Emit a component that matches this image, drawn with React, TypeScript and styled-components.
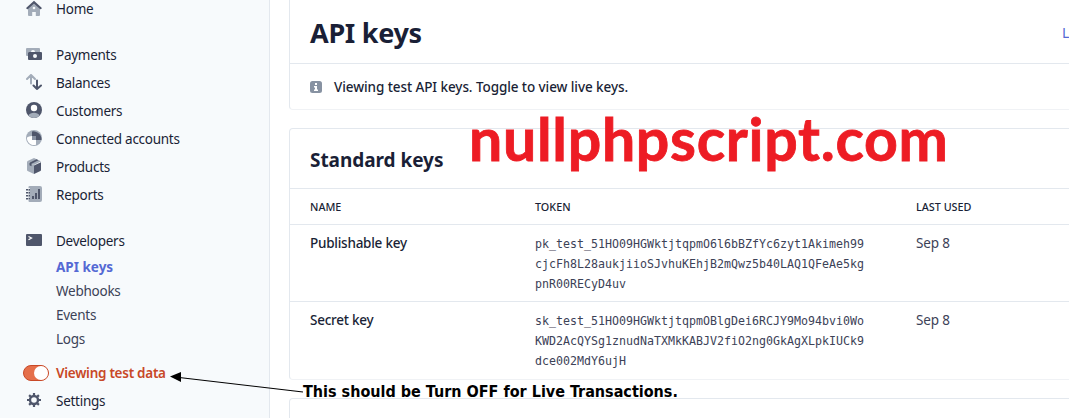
import React from "react";
import styled, { createGlobalStyle } from "styled-components";

const GlobalStyle = createGlobalStyle`
  html, body { margin: 0; background: #fff; overflow: hidden; }
  * { box-sizing: border-box; }
`;

const ink = "#1a1f36";
const slate = "#4f566b";
const mist = "#a3acb9";
const line = "#e3e8ee";

const Page = styled.div`
  position: relative;
  display: flex;
  width: 1069px;
  height: 418px;
  overflow: hidden;
  font-family: "Noto Sans", "Open Sans", sans-serif;
  font-size: 14px;
  color: ${ink};
`;

const Sidebar = styled.nav`
  flex: none;
  width: 270px;
  height: 418px;
  background: #f7fafc;
  border-right: 1px solid ${line};
  overflow: hidden;
`;

const NavGroup = styled.div<{ $top: number }>`
  margin-top: ${(p) => p.$top}px;
`;

const NavItem = styled.div<{ $active?: boolean }>`
  display: flex;
  align-items: center;
  height: 28px;
  white-space: nowrap;
  font-size: 13.5px;
  font-weight: ${(p) => (p.$active ? 600 : 400)};
  color: ${(p) => (p.$active ? "#c84827" : ink)};
`;

const NavLabel = styled.span`
  letter-spacing: -0.27px;
`;

const IconSlot = styled.span`
  display: flex;
  flex: none;
  width: 56px;
  padding: 0 0 2px 26px;
`;

const ToggleSlot = styled.span`
  flex: none;
  width: 56px;
  padding-left: 23px;
`;

const Toggle = styled.span`
  display: flex;
  justify-content: flex-end;
  width: 26px;
  height: 16px;
  border: 1px solid #c84827;
  border-radius: 8px;
  background: #e56f4a;
`;

const Knob = styled.span`
  width: 14px;
  height: 14px;
  border-radius: 50%;
  background: #fff;
`;

const SubItem = styled.div<{ $active?: boolean }>`
  display: flex;
  align-items: center;
  height: 24px;
  padding-left: 56px;
  font-size: 13.5px;
  letter-spacing: ${(p) => (p.$active ? 0 : -0.25)}px;
  font-weight: ${(p) => (p.$active ? 700 : 400)};
  color: ${(p) => (p.$active ? "#5469d4" : "#3c4257")};
`;

const Main = styled.main`
  flex: 1;
  min-width: 0;
  display: flex;
  flex-direction: column;
  gap: 18px;
  padding-left: 19px;
  margin-top: -10px;
`;

const Card = styled.section`
  flex: none;
  width: 800px;
  border: 1px solid ${line};
  border-bottom-color: #f0f2f5;
  border-radius: 4px;
`;

const PageHeader = styled.header`
  display: flex;
  align-items: center;
  justify-content: space-between;
  height: 73px;
  padding: 10px 0 0 20px;
  border-bottom: 1px solid ${line};
`;

const PageTitle = styled.h1`
  margin: 0;
  font-size: 27px;
  font-weight: 700;
  letter-spacing: -0.3px;
`;

const HeaderLink = styled.a`
  width: 26px;
  font-size: 14px;
  color: #5469d4;
  white-space: nowrap;
`;

const Banner = styled.div`
  display: flex;
  align-items: center;
  gap: 12px;
  height: 45px;
  padding: 0 0 0 20px;
  font-size: 13.5px;
  font-weight: 500;
  letter-spacing: -0.08px;
`;

const CardTitle = styled.h2`
  display: flex;
  align-items: center;
  height: 60px;
  margin: 0;
  padding: 3px 0 0 20px;
  border-bottom: 1px solid ${line};
  font-size: 19px;
  font-weight: 700;
  letter-spacing: -0.05px;
`;

const Row = styled.div<{ $head?: boolean; $last?: boolean }>`
  display: grid;
  grid-template-columns: 225px 381px 1fr;
  height: ${(p) => (p.$head ? 36 : 77)}px;
  padding: 8px 0 0 20px;
  border-bottom: ${(p) => (p.$last ? "none" : `1px solid ${line}`)};
  font-size: ${(p) => (p.$head ? 10.8 : 13.5)}px;
  font-weight: ${(p) => (p.$head ? 500 : 400)};
  line-height: 20px;
`;

const KeyName = styled.span`
  font-weight: 500;
  letter-spacing: -0.25px;
`;

const Token = styled.code`
  padding-top: 1px;
  font-family: "DejaVu Sans Mono", monospace;
  font-size: 11.63px;
  line-height: 20px;
  color: #3c4257;
  white-space: pre;
`;

const Muted = styled.span`
  color: #3c4257;
  letter-spacing: -0.15px;
`;

const Watermark = styled.div`
  position: absolute;
  left: 469px;
  top: 103px;
  font-family: Lato, sans-serif;
  font-size: 59px;
  font-weight: 700;
  line-height: 72px;
  letter-spacing: 0.7px;
  color: #ed1c24;
  -webkit-text-stroke: 0.8px #ed1c24;
  white-space: nowrap;
`;

const Note = styled.div`
  position: absolute;
  left: 303px;
  top: 382px;
  font-family: "DejaVu Sans Condensed", "DejaVu Sans", sans-serif;
  font-stretch: condensed;
  font-size: 16px;
  font-weight: 700;
  line-height: 20px;
  color: #000;
  white-space: nowrap;
`;

const Arrow = styled.svg`
  position: absolute;
  left: 165px;
  top: 365px;
`;

const Icon = ({ children }: { children: React.ReactNode }) => (
  <svg width="16" height="16" viewBox="0 0 16 16">{children}</svg>
);

const icons: Record<string, React.ReactNode> = {
  Home: (
    <>
      <path d="M2 7l6-5 6 5v8a1 1 0 0 1-1 1H9.800v-4H6.200v4H3a1 1 0 0 1-1-1z" fill={mist} />
      <circle cx="8" cy="8" r="1.300" fill="#f7fafc" />
      <path d="M1.300 8.200L8 2.200l6.700 6" fill="none" stroke={slate} strokeWidth="2" strokeLinecap="round" />
    </>
  ),
  Payments: (
    <>
      <path d="M1 2h12a1 1 0 0 1 1 1v3H9a2 2 0 0 0-4 0H2v4H1a1 1 0 0 1-1-1V3a1 1 0 0 1 1-1z" fill={mist} />
      <path fillRule="evenodd" d="M3 6h12a1 1 0 0 1 1 1v6a1 1 0 0 1-1 1H3a1 1 0 0 1-1-1V7a1 1 0 0 1 1-1zm6 2a2 2 0 1 0 0 4 2 2 0 0 0 0-4z" fill={slate} />
    </>
  ),
  Balances: (
    <g fill="none" strokeWidth="2" strokeLinecap="round" strokeLinejoin="round">
      <path d="M5 9.500V2M1 5l4-4 4 4" stroke={mist} />
      <path d="M11 6.500V15M7.500 11.500l3.500 3.500 4-3.500" stroke={slate} />
    </g>
  ),
  Customers: (
    <>
      <circle cx="8" cy="8" r="8" fill={slate} />
      <circle cx="8" cy="6" r="3.200" fill="#fff" />
      <path d="M2.300 13.600C3.500 11.500 5.500 10.700 8 10.700s4.500.8 5.700 2.900A8 8 0 0 1 8 16a8 8 0 0 1-5.700-2.400z" fill={mist} />
    </>
  ),
  "Connected accounts": (
    <>
      <circle cx="8" cy="8" r="8" fill={mist} />
      <path d="M6 1.500A8 8 0 0 1 15.500 10H10A4 4 0 0 0 6 6z" fill={slate} />
      <path d="M6 6v4h4v4.800A7 7 0 0 1 1 7.500Q2.500 6 6 6z" fill="#fff" />
      <path d="M6 6h4v4H6z" fill="#8992a3" />
    </>
  ),
  Products: (
    <>
      <path d="M8 0l7 3.300L8 7 1 3.300z" fill={mist} />
      <path d="M1 3.300l7 3.700V16L1.600 13a1 1 0 0 1-.6-1z" fill={mist} />
      <path d="M15 4.200V12a1 1 0 0 1-.6.9L8 16V7.500z" fill={slate} />
      <path d="M3.500 7.200V4.800L10.500 1.200l2 1-7 3.600v2.400z" fill={slate} />
    </>
  ),
  Reports: (
    <>
      <path d="M3.500 0H14a2 2 0 0 1 2 2v12a2 2 0 0 1-2 2H3.500a1 1 0 0 1-1-1V1a1 1 0 0 1 1-1z" fill={mist} />
      <path d="M0 2.300h4v1.900H0zM0 5.400h4v1.900H0zM0 8.700h4v1.900H0zM0 11.800h4v1.900H0z" fill="#f7fafc" />
      <path d="M0 3h2v1.600H0zM2.500 3H4v1.600H2.500zM0 6h2v1.600H0zM2.500 6H4v1.600H2.500zM0 9h2v1.600H0zM2.500 9H4v1.600H2.500zM0 12h2v1.600H0zM2.500 12H4v1.600H2.500zM6 10h2v3H6zM9 7h2v6H9zM12 3h2v10h-2z" fill={slate} />
    </>
  ),
  Developers: (
    <>
      <path d="M1 2h14a1 1 0 0 1 1 1v10a1 1 0 0 1-1 1H1a1 1 0 0 1-1-1V3a1 1 0 0 1 1-1z" fill={slate} />
      <path d="M2.500 4.500L5.500 6 2.500 7.800" fill="none" stroke="#fff" strokeWidth="1.300" />
    </>
  ),
  Settings: (
    <>
      <circle cx="8" cy="8" r="4" fill="none" stroke={slate} strokeWidth="2.400" />
      <path d="M8 1v2.500M8 12.500V15M1 8h2.500M12.500 8H15M3.100 3.100l1.700 1.700M11.200 11.200l1.700 1.700M3.100 12.900l1.700-1.700M11.200 4.800l1.700-1.700" stroke={slate} strokeWidth="2.200" />
    </>
  ),
};

const NavLink = ({ name }: { name: string }) => (
  <NavItem>
    <IconSlot><Icon>{icons[name]}</Icon></IconSlot>
    <NavLabel>{name}</NavLabel>
  </NavItem>
);

const keys = [
  {
    name: "Publishable key",
    token: "pk_test_51HO09HGWktjtqpmO6l6bBZfYc6zyt1Akimeh99\ncjcFh8L28aukjiioSJvhuKEhjB2mQwz5b40LAQ1QFeAe5kg\npnR00RECyD4uv",
    used: "Sep 8",
  },
  {
    name: "Secret key",
    token: "sk_test_51HO09HGWktjtqpmOBlgDei6RCJY9Mo94bvi0Wo\nKWD2AcQYSg1znudNaTXMkKABJV2fiO2ng0GkAgXLpkIUCk9\ndce002MdY6ujH",
    used: "Sep 8",
  },
];

export default function App() {
  return (
    <Page>
      <GlobalStyle />
      <Sidebar>
        <NavGroup $top={-5}><NavLink name="Home" /></NavGroup>
        <NavGroup $top={18}>
          {["Payments", "Balances", "Customers", "Connected accounts", "Products", "Reports"].map((n) => (
            <NavLink key={n} name={n} />
          ))}
        </NavGroup>
        <NavGroup $top={18}>
          <NavLink name="Developers" />
          <SubItem $active>API keys</SubItem>
          <SubItem>Webhooks</SubItem>
          <SubItem>Events</SubItem>
          <SubItem>Logs</SubItem>
        </NavGroup>
        <NavGroup $top={8}>
          <NavItem $active>
            <ToggleSlot><Toggle><Knob /></Toggle></ToggleSlot>
            <NavLabel>Viewing test data</NavLabel>
          </NavItem>
          <NavLink name="Settings" />
        </NavGroup>
      </Sidebar>
      <Main>
        <Card>
          <PageHeader>
            <PageTitle>API keys</PageTitle>
            <HeaderLink>L</HeaderLink>
          </PageHeader>
          <Banner>
            <svg width="12" height="12" viewBox="0 0 12 12">
              <rect width="12" height="12" rx="2.500" fill="#8792a2" />
              <path d="M5 2h2v2H5zM4 5h3v3.500h1V10H4V8.500h1v-2H4z" fill="#fff" />
            </svg>
            <span>Viewing test API keys. Toggle to view live keys.</span>
          </Banner>
        </Card>
        <Card>
          <CardTitle>Standard keys</CardTitle>
          <Row $head>
            <span>NAME</span>
            <span>TOKEN</span>
            <span>LAST USED</span>
          </Row>
          {keys.map((k, i) => (
            <Row key={k.name} $last={i === keys.length - 1}>
              <KeyName>{k.name}</KeyName>
              <Token>{k.token}</Token>
              <Muted>{k.used}</Muted>
            </Row>
          ))}
        </Card>
        <Card><CardTitle /></Card>
      </Main>
      <Watermark>nullphpscript.com</Watermark>
      <Arrow width="140" height="35" viewBox="0 0 140 35">
        <path d="M10 12L138 27" stroke="#000" strokeWidth="1.200" />
        <path d="M5 11.500L16 7v10z" fill="#000" />
      </Arrow>
      <Note>This should be Turn OFF for Live Transactions.</Note>
    </Page>
  );
}
